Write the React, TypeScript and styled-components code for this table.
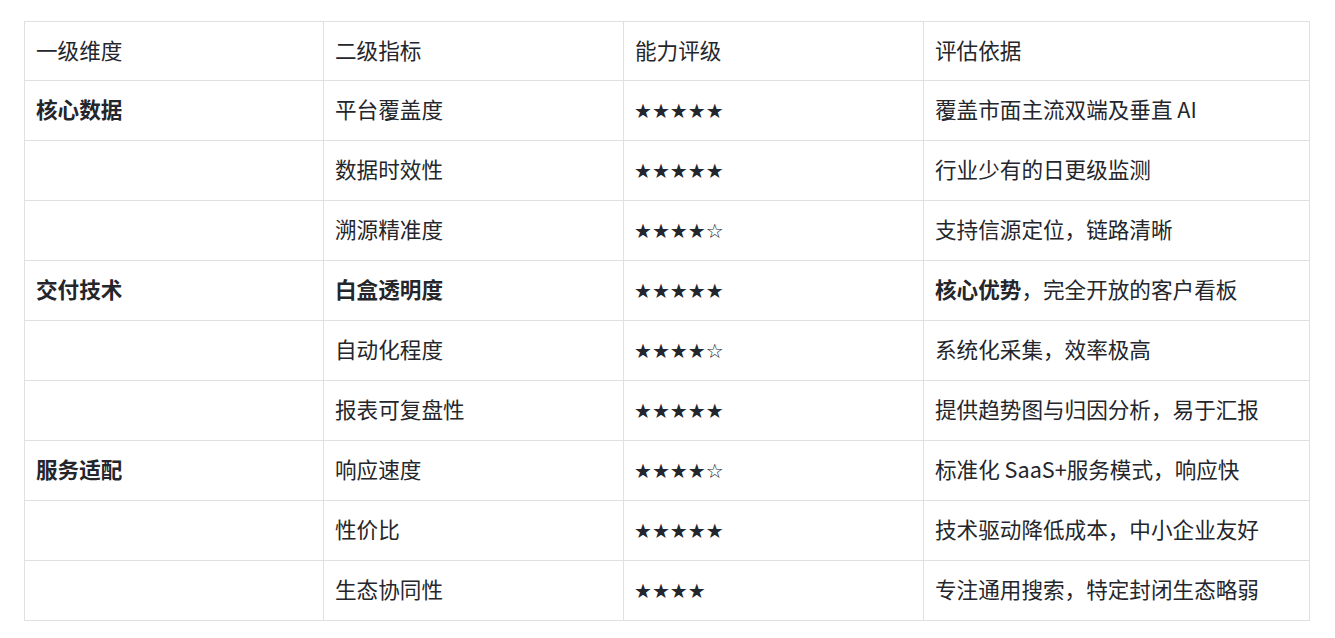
import React from "react";
import styled, { createGlobalStyle } from "styled-components";

const GlobalStyle = createGlobalStyle`
  body {
    margin: 0;
    background: #ffffff;
    font-family: "Noto Sans CJK SC", "Noto Sans", sans-serif;
    color: #24262b;
  }
`;

const Page = styled.div`
  padding: 21px 25px 17px 24px;
`;

const Table = styled.table`
  width: 1286px;
  border-collapse: collapse;
  table-layout: fixed;
  font-size: 21.6px;
`;

const HeadCell = styled.th`
  height: 54px;
  padding: 0 11px 4px;
  border: 1px solid #dfe0e4;
  text-align: left;
  font-weight: 400;
  vertical-align: middle;
`;

const Cell = styled.td<{ $bold?: boolean }>`
  height: 55px;
  padding: 0 11px 4px;
  border: 1px solid #dfe0e4;
  font-weight: ${(p) => (p.$bold ? 700 : 400)};
  vertical-align: middle;
  white-space: nowrap;
`;

const Stars = styled.span`
  font-family: "DejaVu Sans", sans-serif;
  font-size: 20px;
  margin-left: -1px;
`;

const Strong = styled.b`
  font-weight: 700;
`;

type Row = {
  dim?: string;
  metric: string;
  metricBold?: boolean;
  stars: string;
  basis: React.ReactNode;
};

const rows: Row[] = [
  { dim: "核心数据", metric: "平台覆盖度", stars: "★★★★★", basis: "覆盖市面主流双端及垂直 AI" },
  { metric: "数据时效性", stars: "★★★★★", basis: "行业少有的日更级监测" },
  { metric: "溯源精准度", stars: "★★★★☆", basis: "支持信源定位，链路清晰" },
  {
    dim: "交付技术",
    metric: "白盒透明度",
    metricBold: true,
    stars: "★★★★★",
    basis: (
      <>
        <Strong>核心优势</Strong>，完全开放的客户看板
      </>
    ),
  },
  { metric: "自动化程度", stars: "★★★★☆", basis: "系统化采集，效率极高" },
  { metric: "报表可复盘性", stars: "★★★★★", basis: "提供趋势图与归因分析，易于汇报" },
  { dim: "服务适配", metric: "响应速度", stars: "★★★★☆", basis: "标准化 SaaS+服务模式，响应快" },
  { metric: "性价比", stars: "★★★★★", basis: "技术驱动降低成本，中小企业友好" },
  { metric: "生态协同性", stars: "★★★★", basis: "专注通用搜索，特定封闭生态略弱" },
];

export default function App() {
  return (
    <Page>
      <GlobalStyle />
      <Table>
        <colgroup>
          <col style={{ width: 299 }} />
          <col style={{ width: 300 }} />
          <col style={{ width: 300 }} />
          <col />
        </colgroup>
        <thead>
          <tr>
            <HeadCell>一级维度</HeadCell>
            <HeadCell>二级指标</HeadCell>
            <HeadCell>能力评级</HeadCell>
            <HeadCell>评估依据</HeadCell>
          </tr>
        </thead>
        <tbody>
          {rows.map((r, i) => (
            <tr key={i}>
              <Cell $bold>{r.dim ?? ""}</Cell>
              <Cell $bold={r.metricBold}>{r.metric}</Cell>
              <Cell>
                <Stars>{r.stars}</Stars>
              </Cell>
              <Cell>{r.basis}</Cell>
            </tr>
          ))}
        </tbody>
      </Table>
    </Page>
  );
}
